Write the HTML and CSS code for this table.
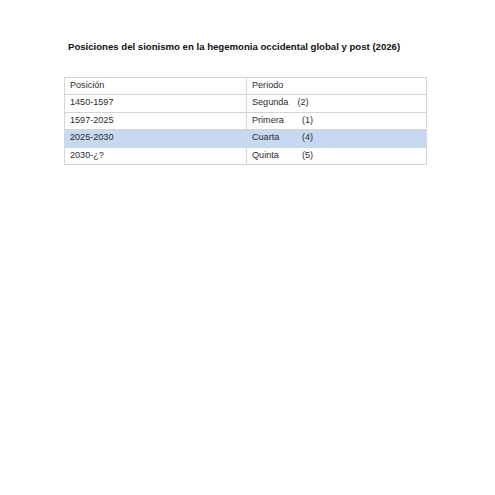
FILE: index.html
```html
<!DOCTYPE html>
<html lang="es">
<head>
<meta charset="utf-8">
<title>Posiciones del sionismo</title>
<link rel="stylesheet" href="styles.css">
</head>
<body>
<div class="page">
  <h1 class="title">Posiciones del sionismo en la hegemonia occidental global y post (2026)</h1>
  <table class="grid">
    <tr class="r-a"><td class="c1">Posición</td><td class="c2">Periodo</td></tr>
    <tr class="r-b"><td class="c1">1450-1597</td><td class="c2"><span class="nm nm-long">Segunda</span><span class="num">(2)</span></td></tr>
    <tr class="r-a"><td class="c1">1597-2025</td><td class="c2"><span class="nm">Primera</span><span class="num">(1)</span></td></tr>
    <tr class="r-b hl"><td class="c1">2025-2030</td><td class="c2"><span class="nm">Cuarta</span><span class="num">(4)</span></td></tr>
    <tr class="r-a"><td class="c1">2030-¿?</td><td class="c2"><span class="nm">Quinta</span><span class="num">(5)</span></td></tr>
  </table>
</div>
</body>
</html>
```
FILE: styles.css
```css
html, body {
  margin: 0;
  padding: 0;
  background: #ffffff;
}
.page {
  padding: 40px 0 0 64px;
  font-family: "Liberation Sans", Arial, sans-serif;
  color: #2b2b2b;
}
.title {
  margin: 0 0 24px 4px;
  font-size: 9.6px;
  font-weight: bold;
  color: #111;
  line-height: 13px;
}
.grid {
  border-collapse: collapse;
  width: 363px;
  font-size: 9.1px;
}
.grid td {
  border: 1px solid #d4d4d4;
  padding: 1px 0 3px 5px;
  vertical-align: top;
  line-height: 12px;
}
.grid .r-b td {
  padding-bottom: 4px;
}
.c1 { width: 176px; }
.hl td { background: #c6d9f1; }
.nm {
  display: inline-block;
  min-width: 46px;
  margin-right: 4px;
}
.nm-long {
  min-width: 0;
  margin-right: 9px;
}
```
